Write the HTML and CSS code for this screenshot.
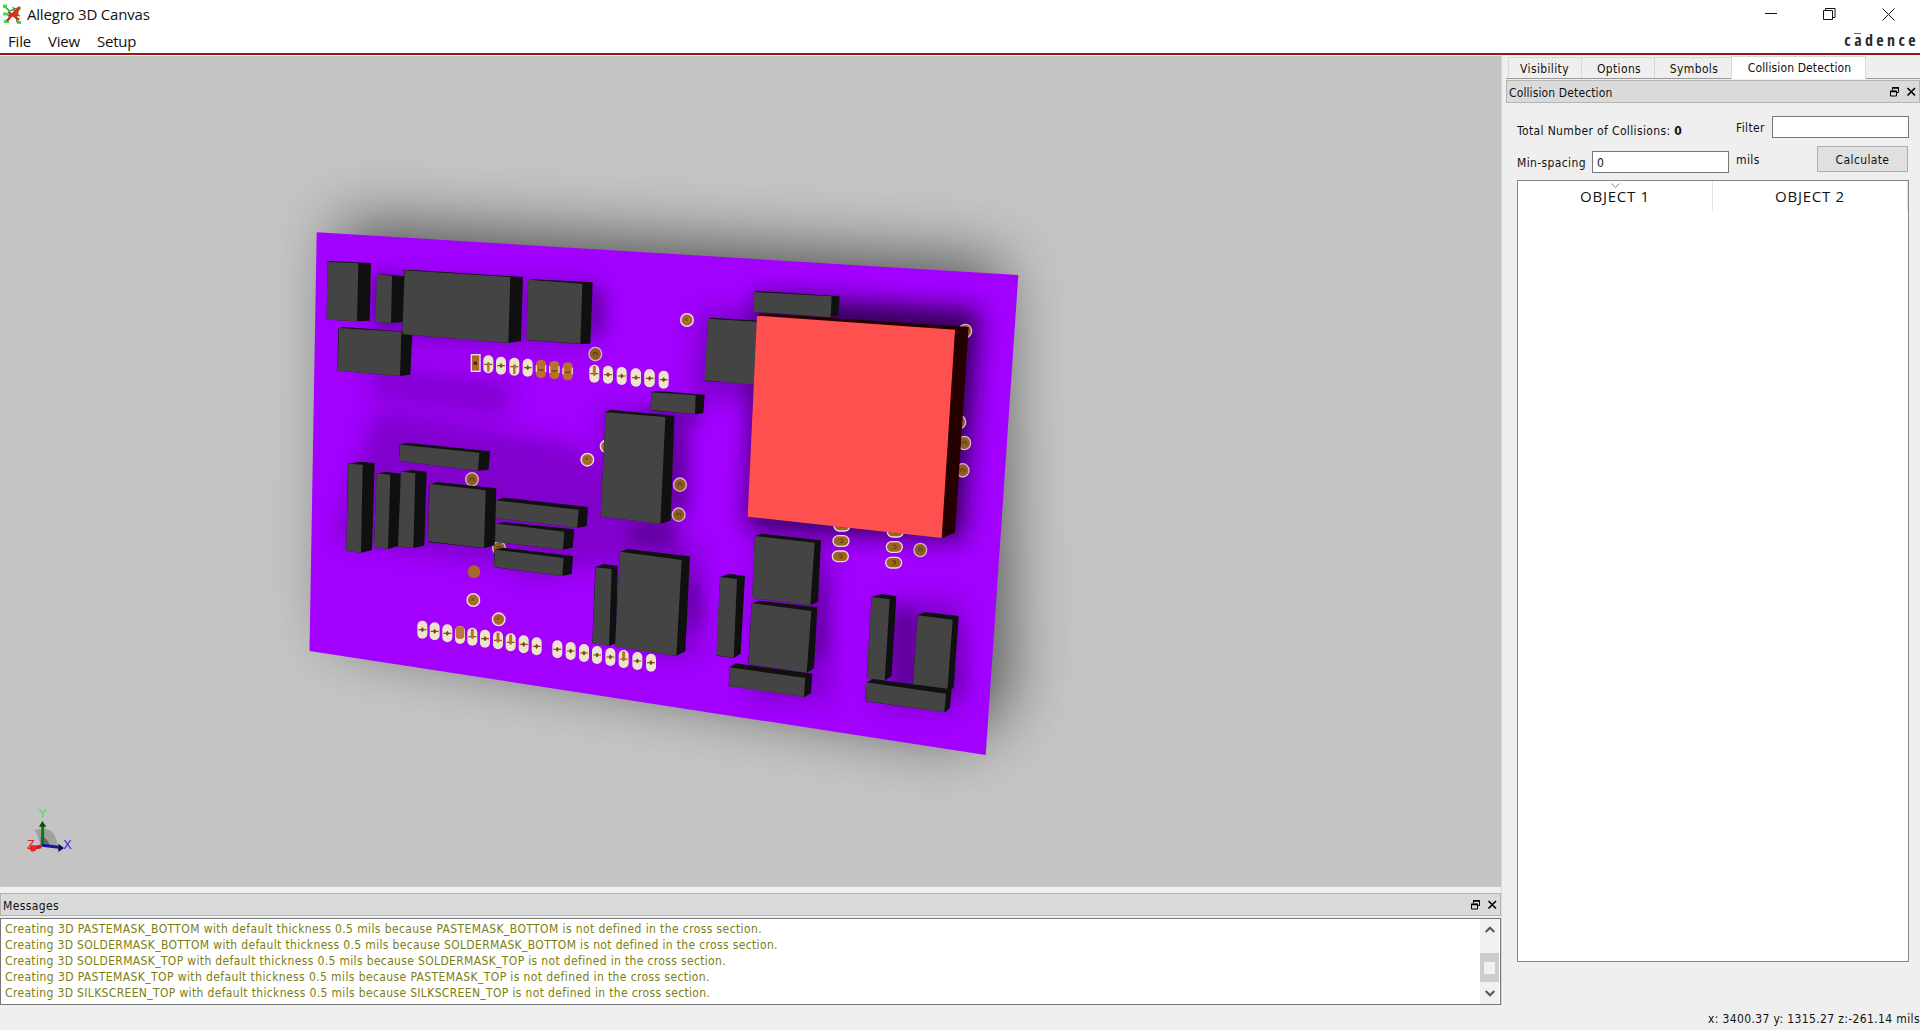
FILE: index.html
```html
<!DOCTYPE html>
<html lang="en">
<head>
<meta charset="utf-8">
<title>Allegro 3D Canvas</title>
<link rel="stylesheet" href="styles.css">
</head>
<body>
<div class="app">
  <header class="titlebar">
    <svg class="app-icon" width="20" height="20" viewBox="0 0 20 20" fill="none">
      <path d="M2 3c4 0 4 6 8 3s6-1 8-1M1 10h4l3 3 5-3 5 2M2 17c4 1 5-3 6-5M11 3l3 8 1 7h4" stroke="#3f9a3c" stroke-width="1.400"/>
      <path d="M1 2h4M1 10h4M2 17.500h5M15 5h3.500M15 19h4" stroke="#37e04a" stroke-width="2.800"/>
      <path d="M5 17C8 13 12 8 18 3M6 8c4 2 6 4 11 8M7 11h8l1-7" stroke="#d5301c" stroke-width="2.300"/>
    </svg>
    <h1 class="app-title">Allegro 3D Canvas</h1>
    <div class="window-buttons">
      <svg width="12" height="12" viewBox="0 0 12 12"><path d="M0 5.500h12" stroke="#111"/></svg>
      <svg width="13" height="13" viewBox="0 0 13 13" fill="none" stroke="#111"><path d="M.5 2.500h9v9h-9zM2.500 2.500v-2h9.500v9h-2.500"/></svg>
      <svg width="13" height="13" viewBox="0 0 13 13" stroke="#111"><path d="M.5.5l12 12M12.500.5l-12 12"/></svg>
    </div>
  </header>
  <nav class="menubar">
    <span class="menu-item">File</span><span class="menu-item">View</span><span class="menu-item">Setup</span>
    <span class="brand">c<span class="brand-a">a</span>dence</span>
  </nav>
  <main class="workspace">
    <section class="left">
      <svg class="canvas" width="1501" height="831" viewBox="0 56 1501 831">
        <defs>
          <filter id="b40" x="-30%" y="-30%" width="160%" height="160%"><feGaussianBlur stdDeviation="32"/></filter>
          <filter id="b12" x="-50%" y="-50%" width="200%" height="200%"><feGaussianBlur stdDeviation="12"/></filter>
          <filter id="b8" x="-80%" y="-80%" width="260%" height="260%"><feGaussianBlur stdDeviation="8"/></filter>
          <clipPath id="board"><path d="M316.700 232.300L1018.300 275 985.700 755 309.500 651z"/></clipPath>
          <g id="pad"><rect x="-15" y="-27" width="30" height="54" rx="15" fill="#ece5cb"/><path d="M-12 0H12M0-7V7" stroke="#8a5a22" stroke-width="3.500"/><circle r="5" fill="#7d4c12"/></g>
          <g id="padl"><use href="#pad"/><path d="M0-23V4" stroke="#b8722c" stroke-width="9"/></g>
          <g id="padu"><use href="#pad"/><path d="M0-4V22" stroke="#b8722c" stroke-width="7"/></g>
          <g id="padb"><rect x="-15" y="-27" width="30" height="54" rx="13" fill="#b8712b"/><path d="M-14-11v20M14-11v20" stroke="#ead9bd" stroke-width="4"/><path d="M-8 3H8" stroke="#6c3f0e" stroke-width="4"/></g>
          <g id="via"><circle r="19" fill="#b5742f" stroke="#f2dff0" stroke-width="4"/><circle r="11" fill="none" stroke="#93591a" stroke-width="3"/><path d="M-4 3V-4H4M-1 1h4" fill="none" stroke="#4a2c0c" stroke-width="2"/></g>
          <g id="viad"><ellipse rx="19" ry="20" fill="#8f5d22" stroke="#d5b3cf" stroke-width="4"/><path d="M-5 4V-4H5V5" fill="none" stroke="#5a3a12" stroke-width="3"/></g>
          <g id="viah"><rect x="-24" y="-16" width="48" height="32" rx="16" fill="#9c651f" stroke="#ecd9e6" stroke-width="4"/><path d="M-5-5H5V4H-3" fill="none" stroke="#5a3a12" stroke-width="3"/></g>
        </defs>
        <rect y="56" width="1501" height="831" fill="#c4c4c4"/>
        <path d="M340 222L1000 262 1008 700 958 740 338 634z" fill="#000" opacity=".57" filter="url(#b40)"/>
        <path d="M316.700 232.300L1018.300 275 985.700 755 309.500 651z" fill="#a200ff"/>
        <g clip-path="url(#board)" fill="#12002c">
          <g filter="url(#b12)" opacity=".24">
            <path d="M370 280h225v65H370zM365 365l150 20-10 30-130-20zM375 410l200 35 50 60-10 40-70 25-210-30z"/>
            <path d="M600 410h80v130h-80zM510 500l110 10v50l-100 20zM610 545h90v110h-60zM760 540h70v160h-80zM880 600h80v110h-80zM700 310h70v90h-80z"/>
          </g>
          <path d="M758 295L980 310 962 540 748 528z" filter="url(#b12)" opacity=".78"/>
          <g filter="url(#b8)" opacity=".36">
            <path d="M590 290h14v44h-14zM375 275h25v45h-25zM645 410h55v15h-55zM668 430h20v80h-20zM630 525h45v20h-45zM688 580h12v45h-12zM818 575h8v80h-14zM895 610h20v80h-20zM957 625h6v70h-10z"/>
          </g>
        </g>
        <g transform="translate(300 220) scale(.33333)">
          <path d="M82 127l6-4 125 6-4 173-38 2-91-5z" fill="#101010"/><path d="M82 126l93 4-4 174-91-5z" fill="#444"/>
          <path d="M231 168l11-5 75 6-5 137-42 3-42-4z" fill="#101010"/><path d="M231 163l45 4-3 142-47-4z" fill="#444"/>
          <path d="M115 325l18-4 204 16-6 127-30 4-189-16z" fill="#101010"/><path d="M117 324l187 11-4 133-188-16z" fill="#444"/>
          <path d="M312 151l20-2 337 22-6 192-38 6-318-26z" fill="#101010"/><path d="M314 151l317 20-6 198-318-26z" fill="#444"/>
          <path d="M685 181l15-3 178 9-7 184-31 1-160-12z" fill="#101010"/><path d="M685 179l162 12-6 180-162-12z" fill="#444"/>
          <path d="M512 402h30v54h-30z" fill="#f4ddf0"/><path d="M516 406h22v46h-22z" fill="#a9682a"/><path d="M521 425h10v10h-10z" fill="#4a2c0c"/>
          <use href="#padu" x="565" y="433"/><use href="#pad" x="603" y="437"/><use href="#padu" x="643" y="440"/><use href="#pad" x="683" y="443"/>
          <use href="#padb" x="723" y="447"/><use href="#padb" x="763" y="450"/><use href="#padb" x="803" y="454"/>
          <use href="#viad" x="886" y="402"/><use href="#padl" x="883" y="461"/><use href="#pad" x="924" y="464"/><use href="#pad" x="965" y="468"/><use href="#pad" x="1007" y="472"/><use href="#pad" x="1048" y="475"/>
        </g>
        <g transform="translate(300 420) scale(.33333)">
          <use href="#via" x="862" y="119"/><use href="#via" x="920" y="79"/><use href="#viad" x="1140" y="194"/><use href="#viad" x="1136" y="284"/>
          <use href="#viad" x="516" y="178"/><use href="#viad" x="597" y="384"/><circle cx="522" cy="455" r="19" fill="#a9682a"/><use href="#via" x="520" y="540"/><use href="#via" x="596" y="598"/>
          <path d="M299 75l22-7 249 26-4 55-32 3-236-29z" fill="#101010"/><path d="M301 74l237 24-4 54-237-29z" fill="#444"/>
          <path d="M144 131l37-6 43 4-8 262-33 7-44-6z" fill="#101010"/><path d="M145 131l43 3-5 264-44-6z" fill="#444"/>
          <path d="M230 161l24-6 48 6-4 216-34 10-42-6z" fill="#101010"/><path d="M230 160l41 4-7 223-42-6z" fill="#444"/>
          <path d="M303 155l32-5 45 5-7 222-33 7-47-5z" fill="#101010"/><path d="M303 155l43 5-6 224-46-6z" fill="#444"/>
          <path d="M590 240l22-7 252 28-4 57-27 5-248-29z" fill="#101010"/><path d="M587 241l249 28-4 54-247-29z" fill="#444"/>
          <path d="M588 312l22-6 213 22-5 55-29 6-204-24z" fill="#101010"/><path d="M588 311l205 24-4 54-204-24z" fill="#444"/>
          <path d="M583 390l25-7 211 25-4 54-29 6-204-26z" fill="#101010"/><path d="M585 389l206 25-4 54-205-27z" fill="#444"/>
          <path d="M387 194l23-8 179 19-5 171-32 9-168-19z" fill="#101010"/><path d="M389 192l168 19-5 173-168-20z" fill="#444"/>
          <path d="M886 441l25-9 42 6-5 232-21 8-50-9z" fill="#101010"/><path d="M887 442l48 5-8 231-50-9z" fill="#444"/>
          <path d="M960 395l24-8 186 22-14 285-28 14-183-29z" fill="#101010"/><path d="M960 395l185 25-16 288-184-28z" fill="#444"/>
          <use href="#pad" x="367" y="629"/><use href="#pad" x="404" y="634"/><use href="#pad" x="442" y="640"/>
          <use href="#pad" x="480" y="645"/><rect x="467" y="619" width="26" height="38" rx="12" fill="#bd7635"/>
          <use href="#padl" x="517" y="650"/><use href="#pad" x="555" y="656"/><use href="#padl" x="594" y="661"/><use href="#padl" x="632" y="667"/><use href="#pad" x="671" y="673"/><use href="#pad" x="710" y="679"/>
          <use href="#pad" x="772" y="688"/><use href="#pad" x="812" y="693"/><use href="#pad" x="852" y="699"/><use href="#pad" x="891" y="705"/><use href="#pad" x="931" y="711"/><use href="#padl" x="971" y="717"/><use href="#pad" x="1012" y="723"/><use href="#pad" x="1053" y="728"/>
        </g>
        <g transform="translate(640 260) scale(.33333)">
          <use href="#pad" x="-12" y="353"/><use href="#pad" x="29" y="355"/><use href="#pad" x="71" y="359"/>
          <use href="#via" x="141" y="180"/><use href="#viad" x="976" y="213"/><use href="#viad" x="958" y="486"/><use href="#viad" x="973" y="549"/><use href="#viad" x="968" y="631"/>
          <use href="#viah" x="606" y="797"/><use href="#viah" x="603" y="843"/><use href="#viah" x="601" y="889"/>
          <use href="#viah" x="766" y="815"/><use href="#viah" x="763" y="861"/><use href="#viah" x="761" y="908"/><use href="#viad" x="841" y="870"/>
          <path d="M35 397l14-5 145 12-4 56-24 3-135-12z" fill="#101010"/><path d="M35 397l132 9-2 56-134-12z" fill="#444"/>
          <path d="M343 97l9-4 247 16-4 57-30 5-223-17z" fill="#101010"/><path d="M343 96l232 13-3 63-231-17z" fill="#444"/>
          <path d="M205 177l10-4 160 10v190l-180-10z" fill="#101010"/><path d="M205 176l160 10v190l-172-15z" fill="#444"/>
          <path d="M-103 455L-88 449 103 467 92 782 61 791-118 770z" fill="#101010"/><path d="M-103 457L76 471 61 791-118 770z" fill="#444"/>
          <path d="M351 168l10-8 625 41-41 617-41 17z" fill="#250000"/><path d="M351 167L945 209 905 834 323 770z" fill="#ff5050"/>
        </g>
        <g transform="translate(700 500) scale(.33333)">
          <path d="M165 108l20-7 178 20-9 184-22 10-175-21z" fill="#101010"/><path d="M165 108l179 20-13 187-175-21z" fill="#444"/>
          <path d="M60 231l28-10 47 7-13 233-21 13-51-7z" fill="#101010"/><path d="M60 231l51 6-10 236-52-7z" fill="#444"/>
          <path d="M155 310l24-8 173 20-10 183-22 14-175-27z" fill="#101010"/><path d="M155 309l179 24-14 186-174-27z" fill="#444"/>
          <path d="M89 502l18-12 230 31-4 58-19 12-228-33z" fill="#101010"/><path d="M89 502l227 32-4 57-226-33z" fill="#444"/>
          <path d="M515 291l28-9 46 7-14 239-22 14-53-9z" fill="#101010"/><path d="M515 291l54 7-15 244-54-8z" fill="#444"/>
          <path d="M653 346l21-10 102 12-15 216-20 10-104-12z" fill="#101010"/><path d="M653 346l105 13-16 215-104-14z" fill="#444"/>
          <path d="M498 549l20-12 237 31-5 56-15 13-239-33z" fill="#101010"/><path d="M498 547l240 34-5 56-237-34z" fill="#444"/>
        </g>
        <g transform="translate(0 780) scale(.33333)">
          <path d="M105 150q62-18 68 50l-50-4z" fill="#777" opacity=".45"/><path d="M122 170q24 4 28 28h-28z" fill="#555" opacity=".7"/>
          <path d="M128 198V136" stroke="#087b10" stroke-width="9"/><path d="M117 140l10-17 12 17z" fill="#064f0b"/>
          <path d="M126 196l50 6" stroke="#1515a5" stroke-width="9"/><path d="M175 191l17 13-17 12z" fill="#080850"/>
          <path d="M124 199l-24 5" stroke="#d51818" stroke-width="11"/><circle cx="99" cy="205" r="10" fill="#e32a2a"/>
          <text x="115" y="115" class="axis axis-y">Y</text><text x="190" y="206" class="axis axis-x">X</text><text x="81" y="206" class="axis axis-z">Z</text>
        </g>
      </svg>
      <div class="dock-title messages-title"><span>Messages</span>
        <svg width="26" height="10" viewBox="0 0 26 10" fill="none" stroke="#000"><path d="M2.500 3V.5h6v5H6.500M.5 4h6v5h-6z"/><path d="M2 1h7M0 4.500h7" stroke-width="1.500"/><path d="M17.500 1l7.500 7.500M25 1l-7.500 7.500" stroke-width="1.600"/></svg>
      </div>
      <div class="messages">
        <div class="log">
          <p>Creating 3D PASTEMASK_BOTTOM with default thickness 0.5 mils because PASTEMASK_BOTTOM is not defined in the cross section.</p>
          <p class="tight">Creating 3D SOLDERMASK_BOTTOM with default thickness 0.5 mils because SOLDERMASK_BOTTOM is not defined in the cross section.</p>
          <p class="tight">Creating 3D SOLDERMASK_TOP with default thickness 0.5 mils because SOLDERMASK_TOP is not defined in the cross section.</p>
          <p>Creating 3D PASTEMASK_TOP with default thickness 0.5 mils because PASTEMASK_TOP is not defined in the cross section.</p>
          <p class="tight">Creating 3D SILKSCREEN_TOP with default thickness 0.5 mils because SILKSCREEN_TOP is not defined in the cross section.</p>
        </div>
        <div class="scrollbar">
          <svg width="10" height="7" viewBox="0 0 10 7" fill="none" stroke="#555" stroke-width="2"><path d="M.7 6L5 1.700 9.300 6"/></svg>
          <div class="thumb"><span class="grip"></span></div>
          <svg width="10" height="7" viewBox="0 0 10 7" fill="none" stroke="#555" stroke-width="2"><path d="M.7 1L5 5.300 9.300 1"/></svg>
        </div>
      </div>
    </section>
    <aside class="right">
      <div class="tabs"><span class="tab t1">Visibility</span><span class="tab t2">Options</span><span class="tab t3">Symbols</span><span class="tab active">Collision Detection</span></div>
      <div class="dock-title panel-title"><span>Collision Detection</span>
        <svg width="26" height="10" viewBox="0 0 26 10" fill="none" stroke="#000"><path d="M2.500 3V.5h6v5H6.500M.5 4h6v5h-6z"/><path d="M2 1h7M0 4.500h7" stroke-width="1.500"/><path d="M17.500 1l7.500 7.500M25 1l-7.500 7.500" stroke-width="1.600"/></svg>
      </div>
      <div class="form">
        <div class="col-a">
          <p class="total">Total Number of Collisions: <b>0</b></p>
          <div class="spacing"><span>Min-spacing</span><span class="input">0</span></div>
        </div>
        <div class="col-b">
          <div class="filter"><span>Filter</span><span class="input"></span></div>
          <div class="calc"><span>mils</span><span class="button">Calculate</span></div>
        </div>
      </div>
      <div class="table">
        <div class="thead"><span class="th">OBJECT 1<svg class="sort" width="9" height="5" viewBox="0 0 9 5" fill="none" stroke="#888"><path d="M.5.5l4 4 4-4"/></svg></span><span class="th">OBJECT 2</span></div>
      </div>
    </aside>
  </main>
  <footer class="status">x: 3400.37 y: 1315.27 z:-261.14 mils</footer>
</div>
</body>
</html>
```
FILE: styles.css
```css
* { box-sizing: border-box; }
body { margin: 0; font-family: "DejaVu Sans Condensed", "DejaVu Sans", sans-serif; font-stretch: condensed; font-size: 12px; letter-spacing: .37px; color: #111; }
p, h1 { margin: 0; font-weight: 400; }
svg { display: block; flex: none; }
.app { width: 1920px; height: 1030px; display: flex; flex-direction: column; background: #efefef; overflow: hidden; }
.titlebar { height: 29px; display: flex; align-items: center; padding: 0 25px 1px 2px; background: #fff; }
.app-title { margin-left: 5px; font: 15px "Open Sans", sans-serif; letter-spacing: -.2px; }
.window-buttons { margin-left: auto; display: flex; align-items: center; gap: 46px; }
.menubar { height: 26px; display: flex; align-items: center; background: #fff; border-bottom: 2px solid #8e1b1b; font: 15px "Open Sans", sans-serif; letter-spacing: -.2px; padding: 0 1px 0 8px; }
.menu-item { margin-right: 17px; }
.brand { margin-left: auto; margin-top: -3px; font: 700 16px "Open Sans", sans-serif; font-stretch: 75%; letter-spacing: 3.400px; color: #2a2a2a; }
.brand-a { position: relative; }
.brand-a::before { content: ""; position: absolute; left: 0; top: 4px; width: 7px; height: 1.500px; background: #c33; }
.workspace { height: 950px; display: flex; }
.left { width: 1501px; display: flex; flex-direction: column; }
.canvas { margin-top: 1px; }
.axis { font: 38px "Liberation Sans Narrow", "Liberation Sans", sans-serif; letter-spacing: 0; }
.axis-x { fill: #2424e0; }
.axis-y { fill: #3be04a; }
.axis-z { fill: #e22020; }
.dock-title { height: 23px; display: flex; align-items: center; justify-content: space-between; padding: 1px 3px 0 2px; background: #dadada; border: 1px solid #b4b4b4; }
.dock-title > span { padding-top: 1px; }
.messages-title { margin-top: 6px; }
.messages { margin-top: 2px; height: 87px; display: flex; justify-content: space-between; background: #fff; border: 1px solid #777; }
.log { padding: 2px 0 0 4px; line-height: 16px; letter-spacing: .395px; color: #7d7d10; white-space: nowrap; }
.tight { letter-spacing: .345px; }
.scrollbar { width: 19px; margin-right: 1px; display: flex; flex-direction: column; align-items: center; padding: 7px 0 7px; background: #f0f0f0; }
.thumb { margin: 20px 0 8px; width: 19px; height: 30px; display: grid; place-items: center; background: #cdcdcd; }
.grip { width: 11px; height: 12px; background: #f0f0f0; }
.right { flex: 1; padding-left: 4px; border-left: 1px solid #d8d8d8; display: flex; flex-direction: column; }
.tabs { height: 24px; padding: 1px 0 0 2px; display: flex; align-items: flex-end; border-bottom: 1px solid #999; }
.tab { height: 21px; padding: 2px 0 0 2px; display: grid; place-items: center; border: 1px solid #d9d9d9; border-width: 1px 0 0 1px; }
.t1 { width: 73px; padding-right: 3px; }
.t2 { width: 73px; }
.t3 { width: 77px; }
.active { width: 135px; height: 23px; margin-bottom: -1px; background: #fff; border-right-width: 1px; padding-top: 0; letter-spacing: .12px; }
.panel-title { margin-top: 1px; letter-spacing: .12px; }
.form { height: 77px; padding: 0 11px 0 11px; display: flex; justify-content: space-between; }
.col-a { width: 212px; padding-top: 19px; }
.total { line-height: 19px; }
.spacing { display: flex; align-items: center; justify-content: space-between; margin-top: 10px; white-space: nowrap; }
.spacing > span { padding-top: 1px; }
.input { height: 22px; width: 137px; padding-left: 4px; display: flex; align-items: center; background: #fff; border: 1px solid #777; }
.col-b { width: 173px; padding-top: 13px; }
.filter, .calc { display: flex; align-items: center; justify-content: space-between; }
.filter > span, .calc > span { padding-top: 1px; }
.calc { margin-top: 8px; padding-right: 1px; }
.button { width: 91px; height: 26px; display: grid; place-items: center; background: #e0e0e0; border: 1px solid #adadad; }
.table { margin: 0 11px 0 11px; height: 782px; background: #fff; border: 1px solid #828790; }
.thead { display: flex; height: 30px; }
.th { flex: 1; position: relative; display: grid; place-items: center; font: 15px "Open Sans", sans-serif; letter-spacing: .75px; border-right: 1px solid #e2e2e2; }
.sort { position: absolute; left: 93px; top: 2px; }
.status { height: 25px; padding-right: 0; line-height: 28px; text-align: right; }
```
